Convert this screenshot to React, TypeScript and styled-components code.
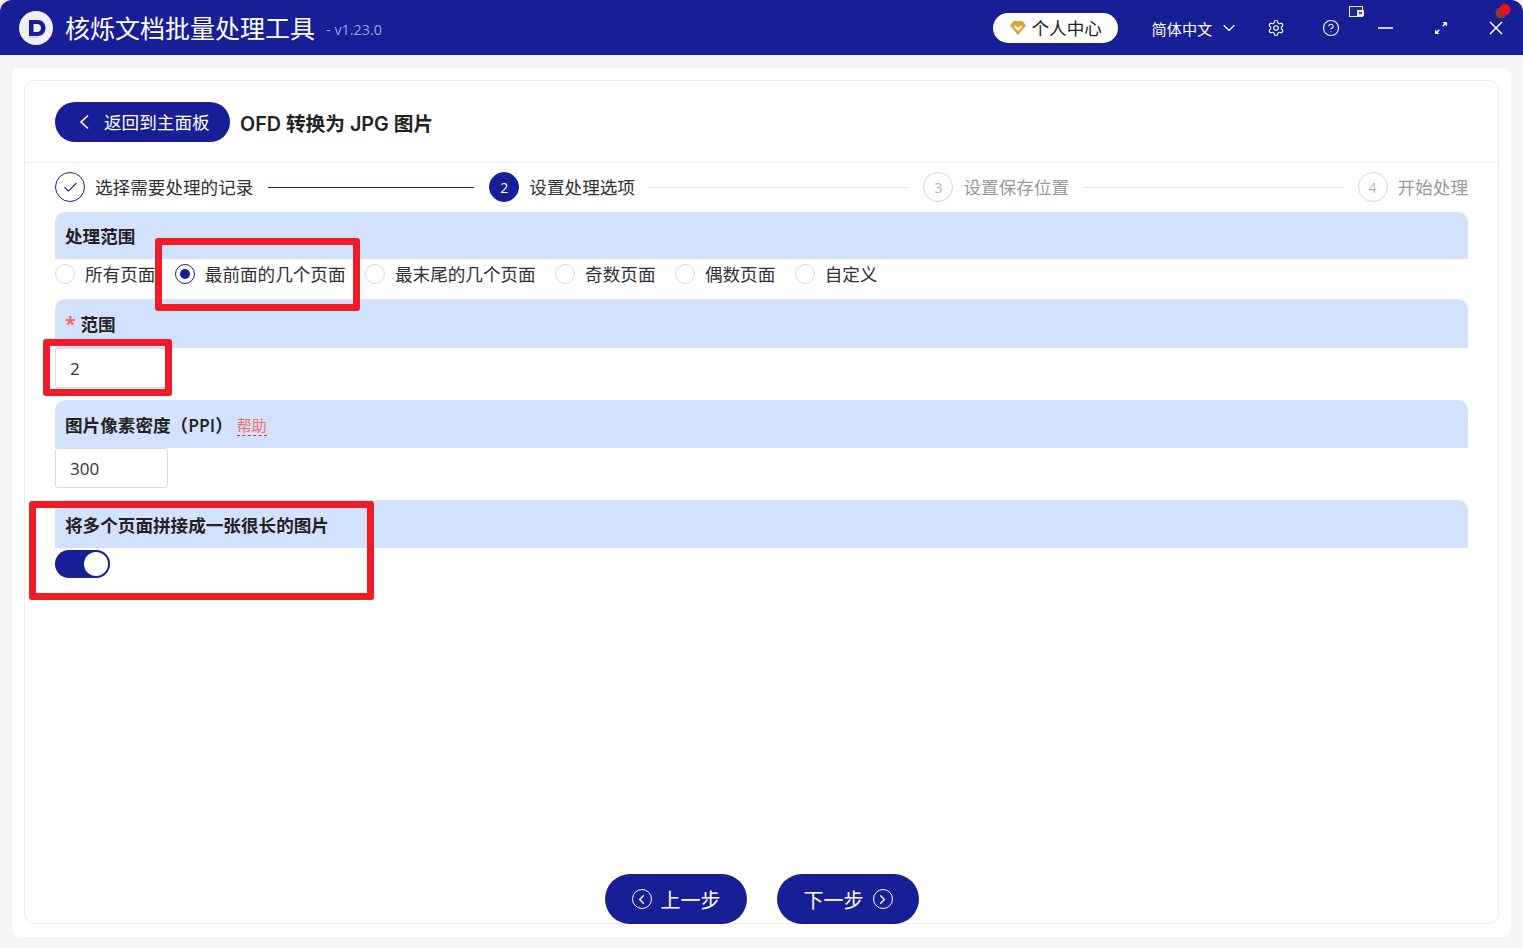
import React from "react";
import styled, { createGlobalStyle } from "styled-components";
import { ChevronDown, ChevronLeft, ChevronRight, Settings, CircleHelp, Check } from "lucide-react";

const NAVY = "#171e96";
const FONT = `"Open Sans", "Noto Sans CJK SC", sans-serif`;

const Global = createGlobalStyle`
  html, body { margin: 0; padding: 0; background: #f5f5f5; }
  body { font-family: ${FONT}; color: #303133; overflow: hidden; }
  * { box-sizing: border-box; }
`;

const Shell = styled.div`
  position: relative;
  width: 1523px;
  height: 948px;
  display: flex;
  flex-direction: column;
`;
const Header = styled.header`
  height: 55px;
  background: ${NAVY};
  border-radius: 12px 12px 0 0;
  display: flex;
  align-items: center;
  padding-left: 19px;
  color: #fff;
  flex: none;
`;
const Logo = styled.svg`
  width: 34px;
  height: 34px;
  flex: none;
`;
const AppName = styled.div`
  font-size: 25px;
  margin-left: 12px;
  line-height: 34px;
`;
const Version = styled.div`
  font-size: 14.4px;
  color: #93a6e6;
  margin-left: 11px;
  margin-top: 3px;
`;
const Controls = styled.div`
  margin-left: auto;
  display: flex;
  align-items: center;
`;
const Pill = styled.div`
  width: 125px;
  height: 30px;
  border-radius: 15px;
  background: #fff;
  color: #222;
  display: flex;
  align-items: center;
  padding-left: 16px;
  font-size: 17.6px;
  gap: 5px;
`;
const Lang = styled.div`
  display: flex;
  align-items: center;
  font-size: 15.2px;
  margin-left: 34px;
  gap: 7px;
  width: 96.5px;
`;
const IconSlot = styled.div`
  width: 55px;
  height: 30px;
  display: flex;
  align-items: center;
  justify-content: center;
  flex: none;
`;
const TrayIcon = styled.svg`
  position: absolute;
  left: 1349px;
  top: 6px;
  width: 16px;
  height: 13px;
`;
const PinIcon = styled.svg`
  position: absolute;
  left: 1493px;
  top: 3px;
  width: 19px;
  height: 20px;
`;
const Main = styled.main`
  flex: 1;
  min-height: 0;
  padding: 13px 12px 11px;
  display: flex;
`;
const Panel = styled.div`
  flex: 1;
  background: #fff;
  border-radius: 8px;
  padding: 12px 12px 13px;
  display: flex;
`;
const Card = styled.div`
  flex: 1;
  border: 1px solid #ececec;
  border-radius: 10px;
  display: flex;
  flex-direction: column;
`;
const PageHead = styled.div`
  height: 82px;
  flex: none;
  border-bottom: 1px solid #eeeeee;
  display: flex;
  align-items: center;
  padding: 0 30px;
  gap: 10px;
`;
const BackButton = styled.div`
  width: 175px;
  height: 40px;
  border-radius: 20px;
  background: ${NAVY};
  color: #fff;
  display: flex;
  align-items: center;
  padding-left: 23px;
  gap: 14px;
  font-size: 17.6px;
`;
const PageTitle = styled.div`
  font-family: Inter, "Noto Sans CJK SC", sans-serif;
  font-size: 19.7px;
  font-weight: 600;
  color: #222;
  margin-top: 2px;
`;
const Content = styled.div`
  flex: 1;
  min-height: 0;
  padding: 9px 30px 0 30px;
  display: flex;
  flex-direction: column;
`;
const Steps = styled.div`
  height: 30px;
  display: flex;
  align-items: center;
  margin-bottom: 10px;
  flex: none;
`;
const StepCircle = styled.div<{ $state: "done" | "active" | "todo" }>`
  width: 30px;
  height: 30px;
  border-radius: 50%;
  flex: none;
  display: flex;
  align-items: center;
  justify-content: center;
  font-size: 14px;
  border: 1px solid ${(p) => (p.$state === "todo" ? "#d4d4d4" : NAVY)};
  background: ${(p) => (p.$state === "active" ? NAVY : "#fff")};
  color: ${(p) => (p.$state === "active" ? "#fff" : p.$state === "todo" ? "#b5b5b5" : NAVY)};
`;
const StepLabel = styled.div<{ $muted?: boolean }>`
  font-size: 17.6px;
  margin: 0 0 2px 10px;
  white-space: nowrap;
  color: ${(p) => (p.$muted ? "#999" : "#303133")};
`;
const StepLine = styled.div<{ $done?: boolean; $w?: number }>`
  height: 1px;
  margin: ${(p) => (p.$done ? "0 15px" : "0 15px 0 14px")};
  background: ${(p) => (p.$done ? NAVY : "#e6e6e6")};
  ${(p) => (p.$w ? `width: ${p.$w}px; flex: none;` : "flex: 1;")}
`;
const Field = styled.section<{ $mb: number }>`
  margin-bottom: ${(p) => p.$mb}px;
  flex: none;
`;
const FieldBar = styled.div<{ $h: number }>`
  height: ${(p) => p.$h}px;
  background: #d2e2fc;
  border-radius: 10px 10px 0 0;
  display: flex;
  align-items: center;
  padding-left: 10px;
  font-size: 17.6px;
  font-weight: 600;
  color: #222;
`;
const Required = styled.span`
  color: #f56c6c;
  margin-right: 4.5px;
  font-weight: 700;
  font-size: 20px;
`;
const Help = styled.span`
  margin: 3px 0 0 4px;
  font-size: 15px;
  font-weight: 400;
  color: #f56c6c;
  line-height: 20px;
  border-bottom: 1px dashed #f02020;
`;
const RadioRow = styled.div`
  height: 30px;
  display: flex;
  align-items: center;
  gap: 19.4px;
`;
const RadioItem = styled.label`
  display: flex;
  align-items: center;
  gap: 10px;
  font-size: 17.6px;
  white-space: nowrap;
`;
const RadioText = styled.span`
  margin-bottom: 2px;
`;
const RadioDot = styled.span<{ $on?: boolean }>`
  width: 20px;
  height: 20px;
  border-radius: 50%;
  border: 1px solid ${(p) => (p.$on ? NAVY : "#d8d8d8")};
  display: flex;
  align-items: center;
  justify-content: center;
  &::after {
    content: "";
    width: 10px;
    height: 10px;
    border-radius: 50%;
    background: ${(p) => (p.$on ? NAVY : "transparent")};
  }
`;
const NumberInput = styled.input`
  display: block;
  width: 113px;
  height: 40px;
  border: 1px solid #d9d9d9;
  border-radius: 3px;
  padding: 0 14px;
  font-family: ${FONT};
  font-size: 17px;
  color: #303133;
  outline: none;
  background: #fff;
`;
const Toggle = styled.div`
  width: 55px;
  height: 28px;
  margin-top: 2px;
  border-radius: 14px;
  background: ${NAVY};
  display: flex;
  align-items: center;
  justify-content: flex-end;
  padding-right: 2px;
  &::after {
    content: "";
    width: 24px;
    height: 24px;
    border-radius: 50%;
    background: #fff;
  }
`;
const Footer = styled.div`
  margin-top: auto;
  margin-bottom: -1px;
  display: flex;
  justify-content: center;
  gap: 30px;
  padding-left: 1px;
`;
const NavButton = styled.div`
  width: 142px;
  height: 50px;
  border-radius: 25px;
  background: ${NAVY};
  color: #fff;
  display: flex;
  align-items: center;
  justify-content: center;
  gap: 9px;
  font-size: 20px;
`;
const NavIcon = styled.span`
  width: 20px;
  height: 20px;
  border: 1.5px solid #fff;
  border-radius: 50%;
  display: flex;
  align-items: center;
  justify-content: center;
`;
const Callout = styled.div<{ $x: number; $y: number; $w: number; $h: number }>`
  position: absolute;
  left: ${(p) => p.$x}px;
  top: ${(p) => p.$y}px;
  width: ${(p) => p.$w}px;
  height: ${(p) => p.$h}px;
  border: 7px solid #ee1c25;
  border-radius: 3px;
  pointer-events: none;
`;

const radios = [
  { label: "所有页面" },
  { label: "最前面的几个页面", on: true },
  { label: "最末尾的几个页面" },
  { label: "奇数页面" },
  { label: "偶数页面" },
  { label: "自定义" },
];

const callouts = [
  { x: 155, y: 238, w: 205, h: 73 },
  { x: 43, y: 339, w: 129, h: 57 },
  { x: 29, y: 501, w: 345, h: 99 },
];

export default function App() {
  return (
    <Shell>
      <Global />
      <Header>
        <Logo viewBox="0 0 34 34">
          <circle cx="17" cy="17" r="17" fill="#f0eff2" />
          <path
            fillRule="evenodd"
            d="M10 9h8.500c5 0 8 3.400 8 8s-3 8-8 8H10zM14.500 13v8h3.500c2.400 0 4-1.600 4-4s-1.600-4-4-4z"
            fill={NAVY}
          />
          <rect x="10" y="25.500" width="9" height="1.500" fill="#c9c9d6" />
        </Logo>
        <AppName>核烁文档批量处理工具</AppName>
        <Version>- v1.23.0</Version>
        <Controls>
          <Pill>
            <svg width="18" height="16" viewBox="0 0 18 16">
              <path d="M4.500 1h9L17 5.500 9 15 1 5.500z" fill="#e0a12f" />
              <path d="M5.500 6 9 9.500 12.500 6" fill="none" stroke="#fff" strokeWidth="2" />
            </svg>
            个人中心
          </Pill>
          <Lang>
            简体中文
            <ChevronDown size={20} strokeWidth={1.4} />
          </Lang>
          <IconSlot>
            <Settings size={18} strokeWidth={1.5} />
          </IconSlot>
          <IconSlot>
            <CircleHelp size={18} strokeWidth={1.5} />
          </IconSlot>
          <IconSlot>
            <svg width="15" height="15" viewBox="0 0 15 15">
              <path d="M0 8h15" stroke="#fff" strokeWidth="1.600" />
            </svg>
          </IconSlot>
          <IconSlot>
            <svg width="14" height="14" viewBox="0 0 14 14" fill="#fff">
              <path d="M8.500 1H13v4.500L11.300 3.800 9.300 5.800 8.200 4.700 10.200 2.700z" />
              <path d="M5.500 13H1V8.500L2.700 10.200 4.700 8.200 5.800 9.300 3.800 11.300z" />
            </svg>
          </IconSlot>
          <IconSlot>
            <svg width="16" height="16" viewBox="0 0 16 16">
              <path d="M2 2l12 12M14 2 2 14" stroke="#fff" strokeWidth="1.500" />
            </svg>
          </IconSlot>
        </Controls>
      </Header>
      <TrayIcon viewBox="0 0 16 13">
        <rect x="0.500" y="0.500" width="13" height="10" fill="#1d2a8c" stroke="#e6e6e6" />
        <rect x="8" y="4" width="7" height="6" fill="#e8e8e8" />
        <rect x="10" y="6" width="3" height="2" fill="#555" />
      </TrayIcon>
      <PinIcon viewBox="0 0 19 20">
        <path d="M1 19 6 12" stroke="#333" strokeWidth="1.500" />
        <circle cx="8" cy="10" r="5.500" fill="#8b3a2e" />
        <circle cx="12" cy="6.500" r="5.500" fill="#e8141c" />
      </PinIcon>
      <Main>
        <Panel>
          <Card>
            <PageHead>
              <BackButton>
                <svg width="12" height="16" viewBox="0 0 12 16">
                  <path d="M10 1.500 3 8l7 6.500" fill="none" stroke="#fff" strokeWidth="1.600" />
                </svg>
                返回到主面板
              </BackButton>
              <PageTitle>OFD 转换为 JPG 图片</PageTitle>
            </PageHead>
            <Content>
              <Steps>
                <StepCircle $state="done">
                  <Check size={17} strokeWidth={1.5} />
                </StepCircle>
                <StepLabel>选择需要处理的记录</StepLabel>
                <StepLine $done $w={206} />
                <StepCircle $state="active">2</StepCircle>
                <StepLabel>设置处理选项</StepLabel>
                <StepLine />
                <StepCircle $state="todo">3</StepCircle>
                <StepLabel $muted>设置保存位置</StepLabel>
                <StepLine />
                <StepCircle $state="todo">4</StepCircle>
                <StepLabel $muted>开始处理</StepLabel>
              </Steps>
              <Field $mb={10}>
                <FieldBar $h={47}>处理范围</FieldBar>
                <RadioRow>
                  {radios.map((r) => (
                    <RadioItem key={r.label}>
                      <RadioDot $on={r.on} />
                      <RadioText>{r.label}</RadioText>
                    </RadioItem>
                  ))}
                </RadioRow>
              </Field>
              <Field $mb={12}>
                <FieldBar $h={49}>
                  <Required>*</Required>范围
                </FieldBar>
                <NumberInput readOnly value="2" />
              </Field>
              <Field $mb={12}>
                <FieldBar $h={48}>
                  图片像素密度（PPI）<Help>帮助</Help>
                </FieldBar>
                <NumberInput readOnly value="300" />
              </Field>
              <Field $mb={0}>
                <FieldBar $h={48}>将多个页面拼接成一张很长的图片</FieldBar>
                <Toggle />
              </Field>
              <Footer>
                <NavButton>
                  <NavIcon>
                    <ChevronLeft size={15} strokeWidth={2.2} />
                  </NavIcon>
                  上一步
                </NavButton>
                <NavButton>
                  下一步
                  <NavIcon>
                    <ChevronRight size={15} strokeWidth={2.2} />
                  </NavIcon>
                </NavButton>
              </Footer>
            </Content>
          </Card>
        </Panel>
      </Main>
      {callouts.map((c) => (
        <Callout key={c.x} $x={c.x} $y={c.y} $w={c.w} $h={c.h} />
      ))}
    </Shell>
  );
}
